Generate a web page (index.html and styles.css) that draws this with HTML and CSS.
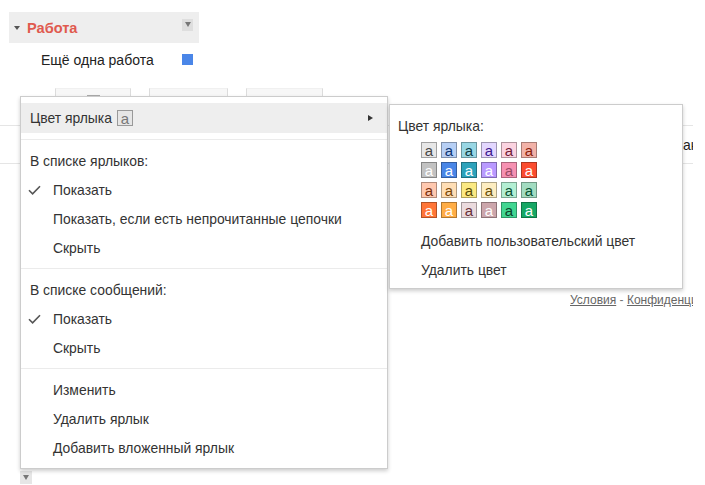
FILE: index.html
```html
<!DOCTYPE html>
<html lang="ru">
<head>
<meta charset="utf-8">
<title>Ярлыки</title>
<link rel="stylesheet" href="styles.css">
</head>
<body>
<div class="page">
  <div class="label-row">
    <span class="caret"></span>
    <span class="label-name">Работа</span>
    <span class="drop-box"><span class="tri"></span></span>
  </div>
  <div class="sub-row">
    <span class="sub-name">Ещё одна работа</span>
    <span class="sub-color"></span>
  </div>
  <div class="toolbar">
    <span class="btn btn1"><span class="cb"></span></span>
    <span class="btn btn2">Ещё</span>
    <span class="btn btn3">Действия</span>
  </div>
  <div class="content-row"><span class="peek">ак</span></div>
  <div class="footer"><a href="#">Условия</a> - <a href="#">Конфиденциальность</a></div>
  <div class="bottom-drop"><span class="tri"></span></div>

  <div class="menu menu-main">
    <div class="item item-hl">
      <span>Цвет ярлыка</span><span class="chip">a</span>
      <span class="arrow"></span>
    </div>
    <div class="sep"></div>
    <div class="head">В списке ярлыков:</div>
    <div class="item opt"><span class="mark"><svg width="13" height="10" viewBox="0 0 13 10"><path d="M1 5.2 L4.6 8.8 L12 1.2" fill="none" stroke="#555" stroke-width="1.6"/></svg></span>Показать</div>
    <div class="item opt"><span class="mark"></span>Показать, если есть непрочитанные цепочки</div>
    <div class="item opt"><span class="mark"></span>Скрыть</div>
    <div class="sep"></div>
    <div class="head">В списке сообщений:</div>
    <div class="item opt"><span class="mark"><svg width="13" height="10" viewBox="0 0 13 10"><path d="M1 5.2 L4.6 8.8 L12 1.2" fill="none" stroke="#555" stroke-width="1.6"/></svg></span>Показать</div>
    <div class="item opt"><span class="mark"></span>Скрыть</div>
    <div class="sep"></div>
    <div class="item opt"><span class="mark"></span>Изменить</div>
    <div class="item opt"><span class="mark"></span>Удалить ярлык</div>
    <div class="item opt"><span class="mark"></span>Добавить вложенный ярлык</div>
  </div>

  <div class="menu menu-color">
    <div class="head2">Цвет ярлыка:</div>
    <div class="grid">
      <span class="sw c1">a</span><span class="sw c2">a</span><span class="sw c3">a</span><span class="sw c4">a</span><span class="sw c5">a</span><span class="sw c6">a</span>
      <span class="sw c7">a</span><span class="sw c8">a</span><span class="sw c9">a</span><span class="sw c10">a</span><span class="sw c11">a</span><span class="sw c12">a</span>
      <span class="sw c13">a</span><span class="sw c14">a</span><span class="sw c15">a</span><span class="sw c16">a</span><span class="sw c17">a</span><span class="sw c18">a</span>
      <span class="sw c19">a</span><span class="sw c20">a</span><span class="sw c21">a</span><span class="sw c22">a</span><span class="sw c23">a</span><span class="sw c24">a</span>
    </div>
    <div class="item2 first">Добавить пользовательский цвет</div>
    <div class="item2">Удалить цвет</div>
  </div>
</div>
</body>
</html>
```
FILE: styles.css
```css
html, body {
  margin: 0;
  padding: 0;
  background: #fff;
}
body {
  font-family: "Liberation Sans", Arial, sans-serif;
  font-size: 13.9px;
  color: #333;
}
.page {
  position: relative;
  width: 693px;
  height: 485px;
  overflow: hidden;
}
.label-row {
  margin: 12px 0 0 9px;
  width: 190px;
  height: 31px;
  background: #eee;
  display: flex;
  align-items: center;
}
.caret {
  margin: 0 7px 0 5px;
  width: 0;
  height: 0;
  border-top: 4px solid #555;
  border-left: 3.5px solid transparent;
  border-right: 3.5px solid transparent;
}
.label-name {
  font-size: 14.6px;
  font-weight: bold;
  color: #e05a4e;
}
.drop-box, .bottom-drop {
  margin-left: auto;
  margin-right: 6px;
  margin-top: -6px;
  width: 11px;
  height: 12px;
  background: #dedede;
  display: flex;
  align-items: center;
  justify-content: center;
}
.tri {
  width: 0;
  height: 0;
  border-top: 5px solid #777;
  border-left: 3px solid transparent;
  border-right: 3px solid transparent;
}
.sub-row {
  width: 152px;
  height: 33px;
  padding-left: 41px;
  display: flex;
  align-items: center;
}
.sub-name {
  font-size: 14px;
  color: #222;
}
.sub-color {
  margin-left: auto;
  width: 11px;
  height: 11px;
  background: #4a86e8;
}
.toolbar {
  height: 37px;
  padding: 12px 0 0 55px;
  border-bottom: 1px solid #e5e5e5;
  display: flex;
  gap: 18px;
}
.btn {
  height: 27px;
  border: 1px solid #dcdcdc;
  border-top-color: #f0f0f0;
  background: #f7f7f7;
  font-size: 12px;
  color: #444;
  display: flex;
  align-items: center;
  justify-content: center;
  box-sizing: border-box;
}
.btn1 { width: 76px; }
.btn2 { width: 79px; }
.btn3 { width: 77px; }
.cb {
  width: 11px;
  height: 11px;
  border: 1px solid #aaa;
  background: #fff;
}
.content-row {
  height: 37px;
  border-bottom: 1px solid #e5e5e5;
  display: flex;
  align-items: center;
  padding-left: 683px;
  color: #222;
  white-space: nowrap;
}
.footer {
  margin-top: 129px;
  padding-left: 570px;
  font-size: 12px;
  line-height: 14px;
  color: #777;
  white-space: nowrap;
}
.footer a {
  color: #666;
  text-decoration: underline;
}
.bottom-drop {
  margin: 164px 0 0 20px;
  width: 12px;
  height: 13px;
  background: #e6e6e6;
}
.menu {
  position: absolute;
  background: #fff;
  border: 1px solid rgba(0, 0, 0, 0.2);
  box-shadow: 0 2px 4px rgba(0, 0, 0, 0.2);
}
.menu-main {
  left: 20px;
  top: 96px;
  width: 366px;
  padding: 6px 0;
}
.item {
  height: 29px;
  display: flex;
  align-items: center;
  padding-left: 7px;
  white-space: nowrap;
}
.item-hl {
  height: 30px;
  padding-left: 9px;
  padding-right: 14px;
  background: #eee;
}
.chip {
  margin-left: 5px;
  width: 16px;
  height: 16px;
  box-sizing: border-box;
  border: 1px solid #999;
  background: #e6e6e6;
  color: #777;
  font-size: 15px;
  line-height: 13px;
  display: flex;
  align-items: center;
  justify-content: center;
}
.arrow {
  margin-left: auto;
  width: 0;
  height: 0;
  border-left: 5px solid #333;
  border-top: 3.5px solid transparent;
  border-bottom: 3.5px solid transparent;
}
.sep {
  height: 1px;
  background: #ebebeb;
  margin: 6px 0;
}
.head {
  height: 29px;
  display: flex;
  align-items: center;
  padding-left: 9px;
}
.mark {
  width: 25px;
  display: flex;
  align-items: center;
}
.menu-color {
  left: 389px;
  top: 104px;
  width: 292px;
  padding: 8px 0 4px;
}
.head2 {
  height: 26px;
  display: flex;
  align-items: center;
  padding-left: 8px;
}
.grid {
  margin: 3px 0 0 31px;
  display: grid;
  grid-template-columns: repeat(6, 16px);
  grid-auto-rows: 16px;
  column-gap: 4px;
  row-gap: 4px;
}
.sw {
  box-sizing: border-box;
  border: 1px solid rgba(0, 0, 0, 0.3);
  font-size: 15px;
  line-height: 13px;
  display: flex;
  align-items: center;
  justify-content: center;
}
.item2 {
  height: 29px;
  display: flex;
  align-items: center;
  padding-left: 31px;
}
.item2.first { margin-top: 8px; }
.c1 { background: #e7e7e7; color: #464646; }
.c2 { background: #b6cff5; color: #0d3472; }
.c3 { background: #98d7e4; color: #0d3b44; }
.c4 { background: #e3d7ff; color: #3d188e; }
.c5 { background: #fbd3e0; color: #711a36; }
.c6 { background: #f2b2a8; color: #8a1c0a; }
.c7 { background: #c2c2c2; color: #fff; }
.c8 { background: #4986e7; color: #fff; }
.c9 { background: #2da2bb; color: #fff; }
.c10 { background: #b99aff; color: #fff; }
.c11 { background: #f691b2; color: #994a64; }
.c12 { background: #fb4c2f; color: #fff; }
.c13 { background: #ffc8af; color: #7a2e0b; }
.c14 { background: #ffdeb5; color: #7a4706; }
.c15 { background: #fbe983; color: #594c05; }
.c16 { background: #fdedc1; color: #684e07; }
.c17 { background: #b3efd3; color: #0b4f30; }
.c18 { background: #a2dcc1; color: #04502e; }
.c19 { background: #ff7537; color: #fff; }
.c20 { background: #ffad46; color: #fff; }
.c21 { background: #ebdbde; color: #662e37; }
.c22 { background: #cca6ac; color: #fff; }
.c23 { background: #42d692; color: #094228; }
.c24 { background: #16a765; color: #fff; }
```
